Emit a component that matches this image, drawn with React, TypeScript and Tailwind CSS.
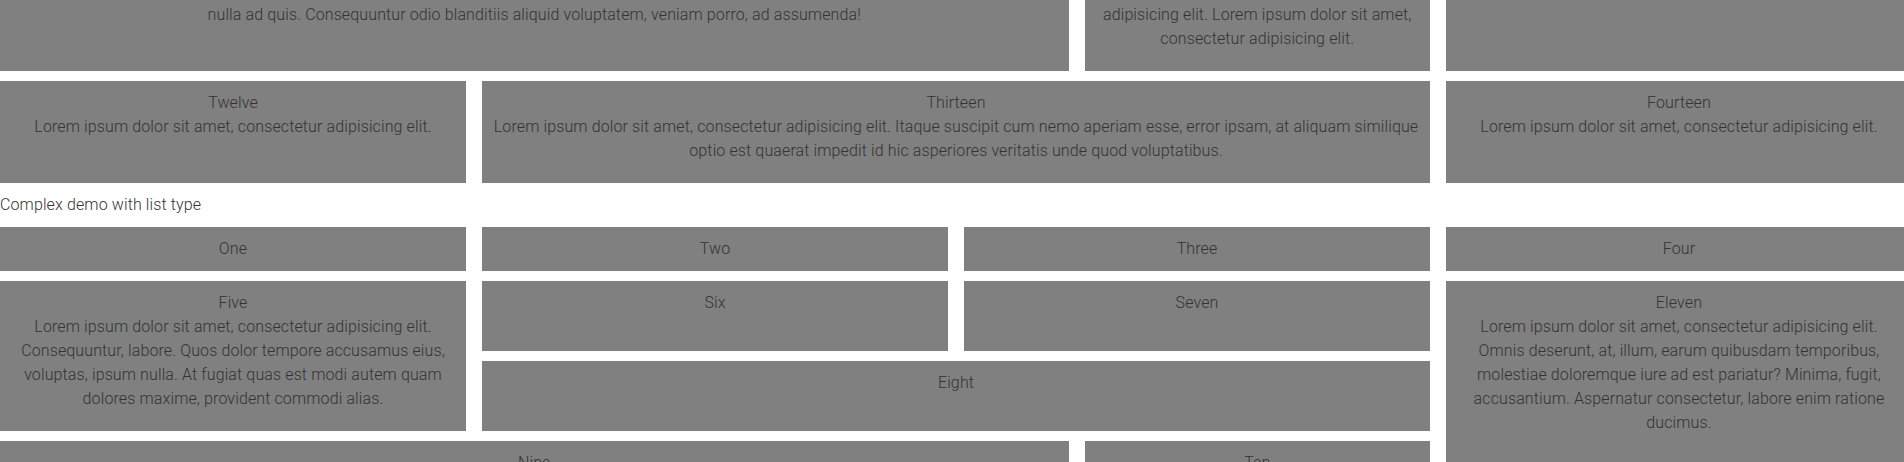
import React from 'react';

function Cell({ children, className = '' }: { children?: React.ReactNode; className?: string }) {
  return <div className={`bg-[#808080] p-[10px] text-center ${className}`}>{children}</div>;
}

export default function App() {
  return (
    <div className="w-full h-[462px] overflow-hidden bg-white font-['Roboto',sans-serif] font-light text-base leading-6 tracking-[0.12px] text-[#333]">
      <div className="w-[1912px]">
        {/* Simple demo (tail of it, page is scrolled) */}
        <div className="grid grid-cols-4 gap-x-4">
          <div className="col-span-3 grid grid-cols-4 gap-x-4">
            <Cell className="col-span-3 h-[71px] !pt-[3px]">
              nulla ad quis. Consequuntur odio blanditiis aliquid voluptatem, veniam porro, ad assumenda!
            </Cell>
            <Cell className="h-[71px] !pt-[3px]">
              adipisicing elit. Lorem ipsum dolor sit amet, consectetur adipisicing elit.
            </Cell>
          </div>
          <Cell className="h-[71px]" />
        </div>

        <div className="grid grid-cols-4 gap-x-4 mt-[10px]">
          <Cell className="h-[102px]">
            Twelve
            <br />
            Lorem ipsum dolor sit amet, consectetur adipisicing elit.
          </Cell>
          <Cell className="col-span-2 h-[102px]">
            Thirteen
            <br />
            Lorem ipsum dolor sit amet, consectetur adipisicing elit. Itaque suscipit cum nemo aperiam esse, error
            ipsam, at aliquam similique optio est quaerat impedit id hic asperiores veritatis unde quod voluptatibus.
          </Cell>
          <Cell className="h-[102px]">
            Fourteen
            <br />
            Lorem ipsum dolor sit amet, consectetur adipisicing elit.
          </Cell>
        </div>

        <p className="py-[10px]">Complex demo with list type</p>

        {/* Complex demo */}
        <div className="grid grid-cols-4 gap-x-4">
          <div className="col-span-3 flex flex-col gap-[10px]">
            <div className="grid grid-cols-3 gap-x-4">
              <Cell>One</Cell>
              <Cell>Two</Cell>
              <Cell>Three</Cell>
            </div>
            <div className="grid grid-cols-3 gap-x-4 h-[150px]">
              <Cell>
                Five
                <br />
                Lorem ipsum dolor sit amet, consectetur adipisicing elit. Consequuntur, labore. Quos dolor tempore
                accusamus eius, voluptas, ipsum nulla. At fugiat quas est modi autem quam dolores maxime, provident
                commodi alias.
              </Cell>
              <div className="col-span-2 grid grid-rows-2 gap-y-[10px]">
                <div className="grid grid-cols-2 gap-x-4">
                  <Cell>Six</Cell>
                  <Cell>Seven</Cell>
                </div>
                <Cell>Eight</Cell>
              </div>
            </div>
            <div className="grid grid-cols-4 gap-x-4">
              <Cell className="col-span-3 h-[120px]">Nine</Cell>
              <Cell className="h-[120px]">Ten</Cell>
            </div>
          </div>
          <div className="flex flex-col gap-[10px]">
            <Cell>Four</Cell>
            <Cell className="flex-1">
              Eleven
              <br />
              Lorem ipsum dolor sit amet, consectetur adipisicing elit.
              <br />
              Omnis deserunt, at, illum, earum quibusdam temporibus, molestiae doloremque iure ad est pariatur? Minima,
              fugit, accusantium. Aspernatur consectetur, labore enim ratione ducimus.
            </Cell>
          </div>
        </div>
      </div>
    </div>
  );
}
